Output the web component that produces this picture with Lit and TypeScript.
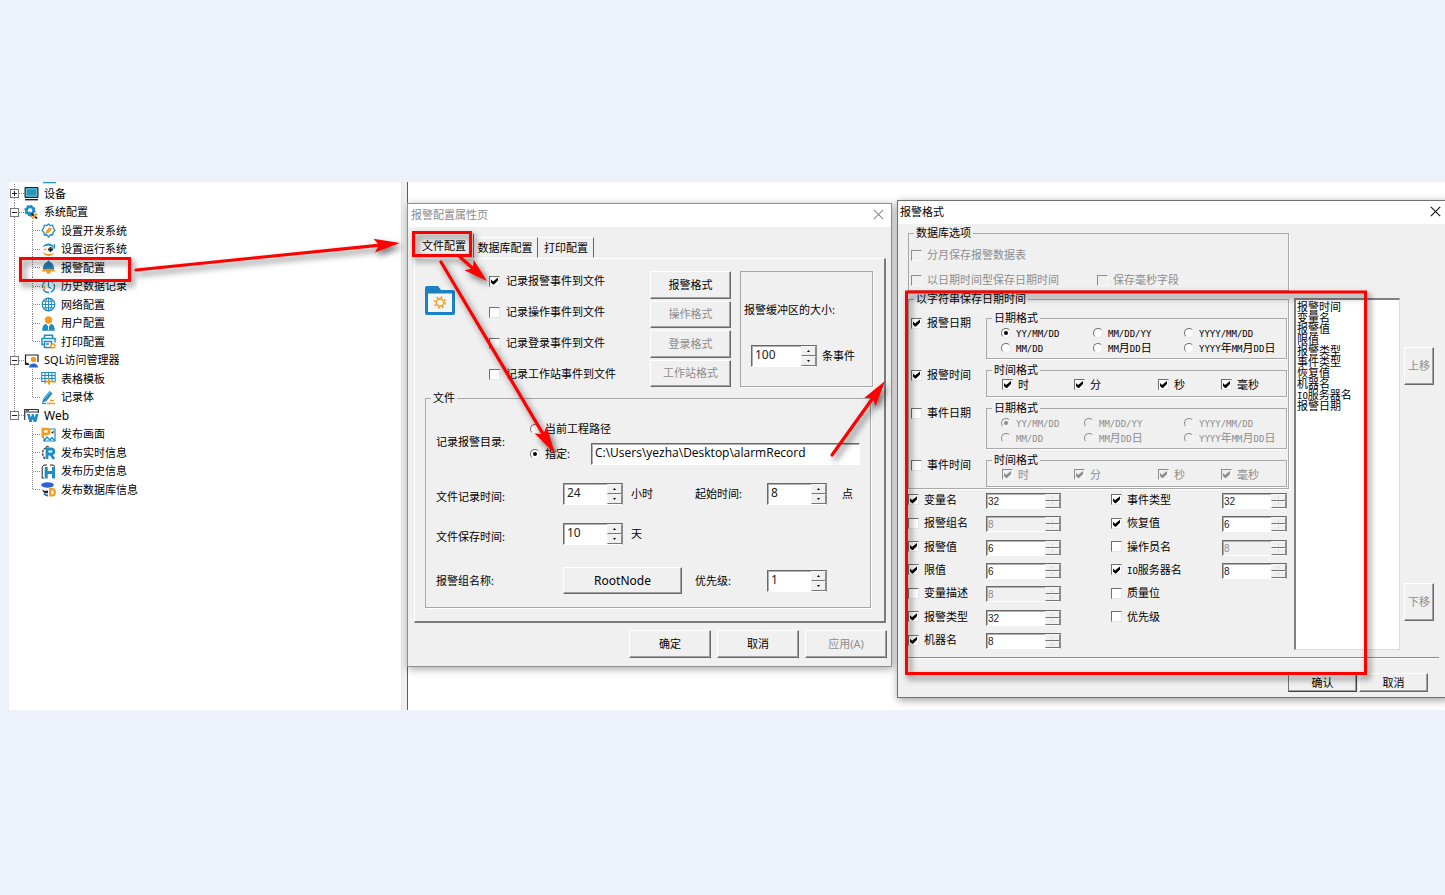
import { LitElement, html, css, svg, nothing } from "lit";
import { customElement, property } from "lit/decorators.js";
import { classMap } from "lit/directives/class-map.js";

/* Classic bevelled controls shared by both dialogs. */
const controls = css`
  * { box-sizing: border-box; }
  :host { font: 11px/14px "Noto Sans", "Noto Sans CJK SC", sans-serif; color: #000; }
  button {
    font: inherit; color: inherit; margin: 0; padding: 0; background: #f0f0f0;
    border: 1px solid; border-color: #fff #696969 #696969 #fff;
    box-shadow: inset -1px -1px #a0a0a0;
  }
  button:disabled { color: #8d8d8d; }
  fieldset { margin: 0; padding: 0; border: 1px solid #a8a8a8; box-shadow: 1px 1px #fff; min-width: 0; }
  legend { margin-left: 5px; padding: 0 2px; line-height: 14px; white-space: nowrap; }
  label { display: flex; align-items: center; gap: 5px; white-space: nowrap; line-height: 14px; }
  input[type="checkbox"], input[type="radio"] {
    appearance: none; flex: none; width: 11px; height: 11px; margin: 0; background: #fff;
    border: 1px solid; border-color: #707070 #e6e6e6 #e6e6e6 #707070;
    display: grid; place-items: center;
  }
  input[type="checkbox"]:checked::before {
    content: ""; width: 9px; height: 9px; background: #000;
    clip-path: polygon(1px 3px, 3px 5px, 8px 1px, 8px 4px, 4px 8px, 3px 8px, 1px 6px);
  }
  input[type="radio"] { width: 10px; height: 10px; border-radius: 50%; }
  input[type="radio"]:checked::before { content: ""; width: 4px; height: 4px; border-radius: 50%; background: #000; }
  input:disabled { background: #f0f0f0; border-color: #8d8d8d #f8f8f8 #f8f8f8 #8d8d8d; }
  input[type="checkbox"]:disabled::before { background: #8d8d8d; }
  input[type="radio"]:disabled::before { background: #8d8d8d; }
  label.off { color: #8d8d8d; }
  .title { display: flex; align-items: center; justify-content: space-between; height: 23px; padding-bottom: 2px; background: #fff; }
  .title h2 { margin: 0; font: inherit; }
  .close { background: none; border: 0; box-shadow: none; width: 12px; height: 12px; display: grid; place-items: center; }
`;

const mixed = (t: string) =>
  t.split(/([A-Za-z/]+)/).map((p) => (/[A-Za-z/]/.test(p) ? html`<span class="mono">${p}</span>` : p));

const closeIcon = (c: string) => html`<svg width="11" height="11" viewBox="0 0 11 11">
  <path d="M.8.8l9.4 9.4M10.2.8L.8 10.2" stroke=${c} stroke-width="1.1" fill="none" /></svg>`;

@customElement("spin-box")
class SpinBox extends LitElement {
  @property() value = "";
  @property() label = "";
  @property({ type: Boolean }) off = false;
  @property({ type: Boolean, reflect: true }) small = false;
  static styles = css`
    * { box-sizing: border-box; }
    :host { display: block; width: 60px; height: 22px; }
    .box {
      display: flex; height: 100%; background: #fff; border: 1px solid;
      border-color: #696969 #8a8a8a #fff #696969; box-shadow: inset 1px 1px #b0b0b0;
    }
    input {
      flex: 1; min-width: 0; width: 0; border: 0; margin: 0; padding: 0 0 2px 3px; background: none; color: #222;
      font: 12px/16px "Noto Sans", sans-serif; outline: 0;
    }
    .arrows { display: grid; grid-template-rows: 1fr 1fr; width: 15px; }
    button {
      display: grid; place-items: center; padding: 0; margin: 0; min-height: 0; background: #f0f0f0;
      border: 1px solid; border-color: #f4f4f4 #8a8a8a #777 #f4f4f4;
    }
    svg { display: block; }
    :host([small]) { height: 16px; width: auto; }
    :host([small]) input { font: 10px/12px "Liberation Sans", sans-serif; padding: 2px 0 0 1px; }
    .off { background: #f0f0f0; }
    .off input { color: #8d8d8d; }
  `;
  render() {
    const w = this.small ? 1 : 3;
    return html`<div class=${classMap({ box: true, off: this.off })}>
      <input type="text" aria-label=${this.label} .value=${this.value} ?disabled=${this.off} />
      <span class="arrows">
        <button aria-label="+" ?disabled=${this.off}><svg width="${w}" height="2" viewBox="0 0 3 2"><path d="M0 2L1.5 0L3 2z" /></svg></button>
        <button aria-label="-" ?disabled=${this.off}><svg width="${w}" height="2" viewBox="0 0 3 2"><path d="M0 0L1.5 2L3 0z" /></svg></button>
      </span>
    </div>`;
  }
}

const B = "#1f8cc4";
const O = "#f79a1c";
const icons: Record<string, unknown> = {
  device: svg`<path d="M1 1.5h13v10H1z" fill="#2b95b8" stroke="#222"/><path d="M2.5 3h10v7h-10z" fill="none" stroke="#7cc6dc" stroke-width=".8"/><path d="M1 13.7h13" stroke="#222" stroke-width="1.4"/>`,
  system: svg`<circle cx="6" cy="5.5" r="3.6" fill="none" stroke="${B}" stroke-width="2.6"/><circle cx="6" cy="5.5" r="5" fill="none" stroke="${B}" stroke-width="1.4" stroke-dasharray="2 1.9"/><path d="M5 7l3 4.5" stroke="${B}" stroke-width="2.5"/><path d="M7.5 8.5l5.5 5" stroke="#222" stroke-width="1.8"/><path d="M13 8.5l-5 5" stroke="${O}" stroke-width="1.8"/>`,
  dev: svg`<path d="M7.5 1l1.8 1.6 2.4-.4.4 2.4L14 7.5l-1.9 2-.4 2.5-2.4-.2L7.5 14l-1.8-2.2-2.4.2-.4-2.5L1 7.5l1.9-2.9.4-2.4 2.4.4z" fill="#fff" stroke="${B}" stroke-width="1.3"/><path d="M4 11l1-3 3.5-4 2.5 2-3.5 4z" fill="${O}"/>`,
  run: svg`<path d="M1.500 5C4 .2 11 .2 13.500 5L10.500 4.500C8 2.500 5.500 3.500 1.500 5z" fill="${B}"/><path d="M1.500 10c2.500 5.200 10 5.200 12 0-3 2.600-8 3-12 0z" fill="${O}"/><path d="M2.500 7.500h3.500" stroke="${O}" stroke-width="2" stroke-dasharray="1 .6"/><path d="M9.500 5v5M7 7.500h5" stroke="#222" stroke-width="1.800"/><path d="M13.500 2v4h-3.500" fill="none" stroke="${B}" stroke-width="1.200"/>`,
  bell: svg`<path d="M7.500 0l1.500 2c3 1 4 4 4.200 7H1.800C2 6 3 3 6 2z" fill="#2a7fb0"/><path d="M.300 11.500l2-2.500h10.400l2 2.500z" fill="${O}"/><path d="M5.500 11h4v1.700c0 1.500-4 1.500-4 0z" fill="${O}"/>`,
  history: svg`<circle cx="7.500" cy="7.500" r="6" fill="#fff" stroke="${B}" stroke-width="1.400" stroke-dasharray="7 1.500"/><path d="M7.500 3v5l3 1.500" fill="none" stroke="${B}" stroke-width="1.200"/><path d="M3.500 7v3" stroke="${O}" stroke-width="1.200"/>`,
  net: svg`<circle cx="7.500" cy="7.500" r="6.300" fill="#fff" stroke="${B}" stroke-width="1.200"/><path d="M7.500 1v13M1 7.500h13M2.200 4.300h10.600M2.200 10.700h10.600" stroke="${B}" fill="none"/><ellipse cx="7.500" cy="7.500" rx="3.200" ry="6.300" fill="none" stroke="${B}"/>`,
  user: svg`<circle cx="7.500" cy="4" r="3.700" fill="${O}"/><path d="M1.200 14.800c0-5 2-6.800 3.800-6.800l2.500 2.500L10 8c2 0 3.800 2 3.800 6.800z" fill="${B}"/><path d="M7.500 10v4" stroke="#fff"/>`,
  print: svg`<path d="M3.500 4V1.200h8V4M3 10.500H1V4.500h13v4M3.500 7.500h7v6h-7z" fill="none" stroke="${B}" stroke-width="1.500"/><path d="M5 10h3" stroke="#222"/><circle cx="12" cy="12" r="2" fill="#fff" stroke="${O}" stroke-width="1.300"/>`,
  sql: svg`<path d="M4 10.500H1.500V2h12.500v7" fill="none" stroke="#222" stroke-width="1.200"/><path d="M1 11.500h4l-2-2" fill="none" stroke="#222"/><circle cx="9.500" cy="6.500" r="2.700" fill="${O}"/><path d="M5 14.500c0-5.200 9-5.200 9 0z" fill="#2a62d8"/>`,
  table: svg`<path d="M.700 1.500h13.500v9H.700zM.700 4.500h13.500M.700 7.500h13.500M4 1.500v11M7.500 1.500v6M11 1.500v9" fill="none" stroke="${B}" stroke-width="1.100"/><path d="M8 7.500v6M5 10.500h6" stroke="${O}" stroke-width="2"/><path d="M11.500 11h3" stroke="${O}" stroke-width="1.600"/>`,
  pen: svg`<path d="M1 13l1.500-5L8.500 1l3 2.500-6 7.500z" fill="${B}"/><path d="M3 9l6-7" stroke="#8fd0ea"/><path d="M1 13.500h4" stroke="${B}" stroke-width="1.200"/><path d="M9 10.500h4M6 13.500h8" stroke="${O}" stroke-width="1.600"/>`,
  web: svg`<path d="M.700 12V1.500h13.600V5M.700 4h13.600" fill="none" stroke="#333" stroke-width="1.200"/><path d="M2 2.700h3" stroke="#333"/><path d="M3 6h2.800l1 3.500L8 6h1.500l1.200 3.500L11.700 6h2.800l-2.200 8H9.800l-1-3-1 3H5.300z" fill="${B}"/>`,
  pub: svg`<path d="M8 2h6v12H3v-3" fill="#fff" stroke="${B}" stroke-width="1.200"/><path d="M3 14l3-4 3 3 2-2.500 3 3.500" fill="none" stroke="${B}" stroke-width="1.300"/><path d="M1.800 11V2h3.500c4 0 4 5 0 5h-3" fill="none" stroke="${O}" stroke-width="2.600"/><path d="M10 6l2.500-2.500v3z" fill="#222"/>`,
  real: svg`<path d="M5 3L3 4 1.500 7l.500 4 2 3" fill="none" stroke="#333" stroke-width="1.300" stroke-dasharray="2.500 1"/><path d="M5 3l1-2 2 1" stroke="#333" fill="none"/><path d="M6 14V4h4c4 0 3.500 5 0 5H7M9.500 9l3.500 5" fill="none" stroke="${B}" stroke-width="2.800"/>`,
  hist: svg`<path d="M3 14H1.200V3L3 1h3M9 1h3l2 1.500" fill="none" stroke="#222"/><path d="M5.200 3v11.500M12.500 3v11.500M5.200 8.500h7" stroke="${B}" stroke-width="3"/>`,
  db: svg`<ellipse cx="6.500" cy="3" rx="6.300" ry="2.700" fill="#2a62d8"/><path d="M1 7c1 2 4 2 6 1.500V11c-2 .500-5 .500-6-4z" fill="#222"/><path d="M3 11.500c1 1.500 2.500 2 4 2" stroke="#2a62d8" stroke-width="2" fill="none"/><path d="M9.200 7.200h2c3.500 0 3.500 6.300 0 6.300h-2z" fill="#fff" stroke="${O}" stroke-width="2.200"/>`,
};

const tree: [number, string, string, string?][] = [
  [0, "device", "设备", "+"],
  [0, "system", "系统配置", "-"],
  [1, "dev", "设置开发系统"],
  [1, "run", "设置运行系统"],
  [1, "bell", "报警配置"],
  [1, "history", "历史数据记录"],
  [1, "net", "网络配置"],
  [1, "user", "用户配置"],
  [1, "print", "打印配置"],
  [0, "sql", "SQL访问管理器", "-"],
  [1, "table", "表格模板"],
  [1, "pen", "记录体"],
  [0, "web", "Web", "-"],
  [1, "pub", "发布画面"],
  [1, "real", "发布实时信息"],
  [1, "hist", "发布历史信息"],
  [1, "db", "发布数据库信息"],
];

@customElement("project-tree")
class ProjectTree extends LitElement {
  static styles = css`
    :host { display: block; background: #fff; font: 11px/18px "Noto Sans", "Noto Sans CJK SC", sans-serif; }
    .edge { width: 13px; height: 2px; margin-left: 34px; background: linear-gradient(#2b95b8 50%, #bfe0ea 50%); }
    ul { list-style: none; margin: 0; padding: 0; }
    li { display: flex; height: 18px; align-items: center; white-space: nowrap; }
    li:nth-child(odd) { height: 19px; }
    .rail { flex: none; align-self: stretch; height: auto; }
    .dot { stroke: #8a8a8a; stroke-dasharray: 1 1; fill: none; shape-rendering: crispEdges; }
    .exp { stroke: #777; fill: #fff; shape-rendering: crispEdges; }
    .sign { stroke: #222; shape-rendering: crispEdges; }
    .icon { flex: none; margin-right: 5px; }
    .name.latin { font-size: 12px; }
    .name.current { background: #f3f3f3; }
  `;
  render() {
    const lastRoot = tree.map((t) => t[0]).lastIndexOf(0);
    return html`<div class="edge"></div><ul>${tree.map(([depth, icon, name, state], i) => {
      const lastChild = depth === 1 && (tree[i + 1]?.[0] ?? 0) === 0;
      const rootEnd = i < lastRoot ? 19 : i === lastRoot ? 9 : 0;
      return html`<li>
        <svg class="rail" width=${depth ? 18 : 15} height="19">
          <path class="dot" d="M5.500 0V${rootEnd}" />
          ${state ? svg`<path class="dot" d="M10 9.500H15"/><rect class="exp" x="1.500" y="5.500" width="8" height="8"/>
            <path class="sign" d="M3 9.500H8${state === "+" ? "M5.500 7V12" : ""}"/>` : nothing}
        </svg>
        ${depth ? html`<svg class="rail" width="14" height="19"><path class="dot" d="M5.500 0V${lastChild ? 10 : 19}M6 9.500H14" /></svg>` : nothing}
        <svg class="icon" width="15" height="15" viewBox="0 0 15 15">${icons[icon]}</svg>
        <span class=${classMap({ name: true, latin: /^[A-Z]/.test(name) && name.length < 4, current: icon === "bell" })}>${name}</span>
      </li>`;
    })}</ul>`;
  }
}

@customElement("alarm-dialog")
class AlarmDialog extends LitElement {
  static styles = [controls, css`
    :host { display: block; background: #f0f0f0; border: 1px solid #8f8f8f; box-shadow: 1px 2px 8px rgba(0, 0, 0, 0.35); }
    .title { padding-left: 3px; padding-right: 7px; color: #8a8a8a; }
    .tabs { display: flex; align-items: flex-end; height: 31px; padding-left: 6px; }
    .tabs button { height: 21px; width: 56px; box-shadow: none; border-color: #fff #696969 transparent transparent; }
    .tabs button.wide { width: 64px; padding-right: 2px; }
    .tabs button.on { width: 60px; height: 25px; border-left-color: #fff; }
    .panel {
      margin: 0 5px 0 6px; padding: 12px 11px 13px 10px;
      border: solid; border-width: 1px 2px 2px 1px; border-color: #fff #7a7a7a #7a7a7a #fff;
    }
    .top { display: grid; grid-template-columns: 64px 1fr 81px 142px; }
    .folder { margin-top: 14px; }
    .checks { display: flex; flex-direction: column; gap: 11px; }
    .checks label { height: 20px; gap: 6px; }
    .formats { display: grid; grid-auto-rows: 1fr; gap: 2px; height: 116px; }
    .buffer { margin-left: 9px; border: 1px solid #a8a8a8; box-shadow: 1px 1px #fff; padding: 31px 0 0 3px; }
    .buffer p { margin: 0; white-space: nowrap; }
    .count { display: flex; align-items: center; gap: 5px; margin: 28px 0 0 7px; }
    .count spin-box { width: 66px; }
    .file { margin: 4px 2px 0 0; padding-bottom: 13px; }
    .dir, .row { display: grid; align-items: center; padding: 0 10px; white-space: nowrap; }
    .dir { grid-template-columns: 94px 1fr; padding-top: 13px; }
    .choice { display: grid; gap: 3px; }
    .choice > * { min-height: 22px; }
    .path { display: flex; }
    .path label { width: 61px; }
    .path input[type="text"] {
      flex: 1; min-width: 0; margin: 0; padding: 0 3px 2px; background: #fff; color: #000; font: 12px/16px "Open Sans", sans-serif;
      border: 1px solid; border-color: #696969 #fff #fff #696969; box-shadow: inset 1px 1px #b0b0b0;
    }
    .row { grid-template-columns: 127px 68px 64px 72px 1fr; margin-top: 18px; }
    .row.times > :first-child { padding-top: 6px; }
    .row.group { margin-top: 22px; }
    .row button { grid-column: 2 / 4; width: 119px; height: 27px; font-size: 12px; }
    .unit { display: flex; align-items: center; gap: 15px; }
    .foot { display: flex; justify-content: flex-end; gap: 6px; padding: 7px 4px 8px; }
    .foot button { width: 82px; height: 28px; }
  `];
  render() {
    const kinds = ["报警", "操作", "登录", "工作站"];
    return html`
      <div class="title"><h2>报警配置属性页</h2><button class="close" aria-label="关闭">${closeIcon("#8a8a8a")}</button></div>
      <div class="tabs" role="tablist">
        <button role="tab" class="on">文件配置</button><button role="tab" class="wide">数据库配置</button><button role="tab">打印配置</button>
      </div>
      <div class="panel">
        <div class="top">
          <svg class="folder" width="30" height="32" viewBox="0 0 30 32">
            <path d="M2 1h11l3 4h12a2 2 0 0 1 2 2v21a2 2 0 0 1-2 2H2a2 2 0 0 1-2-2V3a2 2 0 0 1 2-2z" fill="#1b81c5"/>
            <path d="M3 8.500h24V27H3z" fill="#f2f6f9"/>
            <circle cx="15" cy="17.500" r="3.600" fill="none" stroke="#f7a21c" stroke-width="1.600"/>
            <circle cx="15" cy="17.500" r="5.300" fill="none" stroke="#f7a21c" stroke-width="1.800" stroke-dasharray="1.900 2.260"/>
          </svg>
          <div class="checks">${kinds.map((k, i) => html`<label><input type="checkbox" ?checked=${i === 0} />记录${k}事件到文件</label>`)}</div>
          <div class="formats">${kinds.map((k, i) => html`<button ?disabled=${i > 0}>${k}格式</button>`)}</div>
          <div class="buffer">
            <p>报警缓冲区的大小:</p>
            <div class="count"><spin-box value="100" label="报警缓冲区的大小"></spin-box>条事件</div>
          </div>
        </div>
        <fieldset class="file">
          <legend>文件</legend>
          <div class="dir">
            <span>记录报警目录:</span>
            <div class="choice">
              <label><input type="radio" name="dir" />当前工程路径</label>
              <div class="path">
                <label><input type="radio" name="dir" checked />指定:</label>
                <input type="text" aria-label="指定" value="C:\\Users\\yezha\\Desktop\\alarmRecord" />
              </div>
            </div>
          </div>
          <div class="row times">
            <span>文件记录时间:</span><spin-box value="24" label="文件记录时间"></spin-box><span>小时</span>
            <span>起始时间:</span><span class="unit"><spin-box value="8" label="起始时间"></spin-box>点</span>
          </div>
          <div class="row times">
            <span>文件保存时间:</span><spin-box value="10" label="文件保存时间"></spin-box><span>天</span>
          </div>
          <div class="row group">
            <span>报警组名称:</span><button>RootNode</button>
            <span>优先级:</span><spin-box value="1" label="优先级"></spin-box>
          </div>
        </fieldset>
      </div>
      <div class="foot"><button>确定</button><button>取消</button><button disabled>应用(A)</button></div>`;
  }
}

type Field = [string, boolean, string?];
const leftFields: Field[] = [
  ["变量名", true, "32"], ["报警组名", false, "8"], ["报警值", true, "6"], ["限值", true, "6"],
  ["变量描述", false, "8"], ["报警类型", true, "32"], ["机器名", true, "8"],
];
const rightFields: Field[] = [
  ["事件类型", true, "32"], ["恢复值", true, "6"], ["操作员名", false, "8"], ["IO服务器名", true, "8"],
  ["质量位", false], ["优先级", false],
];

@customElement("format-dialog")
class FormatDialog extends LitElement {
  static styles = [controls, css`
    :host { display: block; background: #f0f0f0; border: 1px solid #707070; box-shadow: 1px 2px 8px rgba(0, 0, 0, 0.4); }
    .mono { font: 9px/11px "DejaVu Sans Mono", monospace; }
    .title { padding-left: 2px; padding-right: 6px; }
    .main { display: grid; grid-template-columns: 381px 107px 30px; column-gap: 4px; padding-left: 10px; }
    .options { display: flex; flex-direction: column; padding-top: 2px; }
    .db > div { display: grid; grid-template-columns: 186px 1fr; row-gap: 11px; padding: 8px 0 3px 2px; }
    .db > div > :first-child { grid-column: 1 / 3; }
    .str { margin-top: 1px; }
    .str > div { display: grid; grid-template-columns: 75px 1fr; row-gap: 4px; padding: 5px 1px 1px 2px; }
    .kind { align-self: start; padding-top: 5px; }
    .dates { display: grid; grid-template-columns: 92px 91px 1fr; grid-auto-rows: 15px; padding: 0 0 3px 14px; }
    .dates.off { grid-template-columns: 83px 100px 1fr; }
    .times { display: grid; grid-template-columns: 72px 84px 63px 1fr; grid-auto-rows: 15px; padding: 0 0 4px 15px; }
    .fields {
      flex: 1; display: grid; grid-template-columns: 78px 125px 111px 65px;
      grid-template-rows: repeat(7, 1fr); grid-auto-flow: column; align-items: center;
    }
    .fields label { padding-bottom: 2px; }
    .fields .left { grid-column: 1; }
    .fields .lspin { grid-column: 2; width: 75px; }
    .fields .right { grid-column: 3; }
    .fields .rspin { grid-column: 4; }
    .list {
      list-style: none; margin: 74px 0 3px 1px; padding: 1px; height: 352px; background: #fff; white-space: nowrap;
      border: solid; border-width: 2px 1px 1px 2px; border-color: #808080 #dcdcdc #dcdcdc #808080;
    }
    .list li { height: 11px; line-height: 11px; }
    .move { display: flex; flex-direction: column; justify-content: space-between; padding: 123px 0 32px; }
    .move button { height: 38px; }
    .foot { display: flex; justify-content: flex-end; gap: 2px; margin: 4px 8px 0 8px; padding: 15px 11px 5px 0; border-top: 1px solid #8a8a8a; box-shadow: inset 0 1px #fff; }
    .foot button { width: 69px; height: 19px; }
    .foot button.default { border-color: #fff #444 #444 #777; }
  `];
  private dates(off: boolean) {
    return html`<fieldset><legend>日期格式</legend><div class=${classMap({ dates: true, off })}>
      ${["YY/MM/DD", "MM/DD/YY", "YYYY/MM/DD", "MM/DD", "MM月DD日", "YYYY年MM月DD日"].map((t, i) => html`
        <label class=${off ? "off" : ""}><input type="radio" name=${off ? "event" : "alarm"} ?checked=${i === 0} ?disabled=${off} /><span>${mixed(t)}</span></label>`)}
    </div></fieldset>`;
  }
  private times(off: boolean) {
    return html`<fieldset><legend>时间格式</legend><div class="times">
      ${["时", "分", "秒", "毫秒"].map((t) => html`<label class=${off ? "off" : ""}><input type="checkbox" checked ?disabled=${off} />${t}</label>`)}
    </div></fieldset>`;
  }
  private kind(t: string, on: boolean) {
    return html`<label class="kind"><input type="checkbox" ?checked=${on} />${t}</label>`;
  }
  private fields(list: Field[], side: string, spin: string) {
    return html`${list.map(([t, on], i) => html`<label class=${side} style="grid-row:${i + 1}"><input type="checkbox" ?checked=${on} /><span>${mixed(t)}</span></label>`)}
      ${list.map(([t, on, v], i) => v ? html`<spin-box small class=${spin} style="grid-row:${i + 1}" label=${t} value=${v} ?off=${!on}></spin-box>` : nothing)}`;
  }
  render() {
    return html`
      <div class="title"><h2>报警格式</h2><button class="close" aria-label="关闭">${closeIcon("#111")}</button></div>
      <div class="main">
        <div class="options">
          <fieldset class="db"><legend>数据库选项</legend><div>
            ${["分月保存报警数据表", "以日期时间型保存日期时间", "保存毫秒字段"].map((t) => html`<label class="off"><input type="checkbox" disabled />${t}</label>`)}
          </div></fieldset>
          <fieldset class="str"><legend>以字符串保存日期时间</legend><div>
            ${this.kind("报警日期", true)}${this.dates(false)}
            ${this.kind("报警时间", true)}${this.times(false)}
            ${this.kind("事件日期", false)}${this.dates(true)}
            ${this.kind("事件时间", false)}${this.times(true)}
          </div></fieldset>
          <div class="fields">
            ${this.fields(leftFields, "left", "lspin")}${this.fields(rightFields, "right", "rspin")}
          </div>
        </div>
        <ul class="list" role="listbox">
          ${["报警时间", "变量名", "报警值", "限值", "报警类型", "事件类型", "恢复值", "机器名", "IO服务器名", "报警日期"].map((t) => html`<li role="option">${mixed(t)}</li>`)}
        </ul>
        <div class="move"><button disabled>上移</button><button disabled>下移</button></div>
      </div>
      <div class="foot"><button class="default">确认</button><button>取消</button></div>`;
  }
}

const arrow = (x1: number, y1: number, x2: number, y2: number, len = 26) => {
  const a = Math.atan2(y2 - y1, x2 - x1);
  const at = (d: number, s: number) => `${x2 - Math.cos(a) * d - Math.sin(a) * s} ${y2 - Math.sin(a) * d + Math.cos(a) * s}`;
  return svg`<path d="M${x1} ${y1}L${at(len - 6, 0)}" stroke="#f00" stroke-width="3.200" stroke-linecap="round"/>
    <path d="M${at(0, 0)}L${at(len, 7)}L${at(len - 5, 0)}L${at(len, -7)}z" fill="#f00"/>`;
};

@customElement("app-root")
class AppRoot extends LitElement {
  static styles = css`
    * { box-sizing: border-box; }
    :host { display: block; box-sizing: border-box; min-height: 100vh; padding: 182px 0 0 9px; background: #edf1fa; overflow: hidden; }
    .stage { position: relative; display: flex; height: 528px; background: #fff; overflow: hidden; }
    project-tree { width: 392px; }
    .split { width: 7px; background: #f0f0f0; border-right: 1px solid #5c5c5c; border-left: 1px solid #e2e2e2; }
    alarm-dialog, format-dialog, .marks { position: absolute; }
    alarm-dialog { left: 398px; top: 21px; width: 485px; }
    format-dialog { left: 888px; top: 18px; width: 551px; }
    .marks { inset: 0; width: 100%; height: 100%; pointer-events: none; filter: drop-shadow(3px 4px 3px rgba(0, 0, 0, 0.55)); }
  `;
  render() {
    return html`<div class="stage">
      <project-tree></project-tree>
      <div class="split"></div>
      <alarm-dialog></alarm-dialog>
      <format-dialog></format-dialog>
      <svg class="marks" fill="none">
        <g transform="translate(-9 -182)">
          <g stroke="#f00" stroke-width="3">
            <rect x="20.500" y="258.500" width="109" height="22" />
            <rect x="413.500" y="232.500" width="57" height="23" />
            <rect x="906.500" y="292" width="459" height="381.500" />
          </g>
          ${arrow(136, 270, 400, 243)}
          ${arrow(460, 257, 487, 281, 24)}
          ${arrow(441, 262, 555, 454, 28)}
          ${arrow(832, 455, 885, 381)}
        </g>
      </svg>
    </div>`;
  }
}
